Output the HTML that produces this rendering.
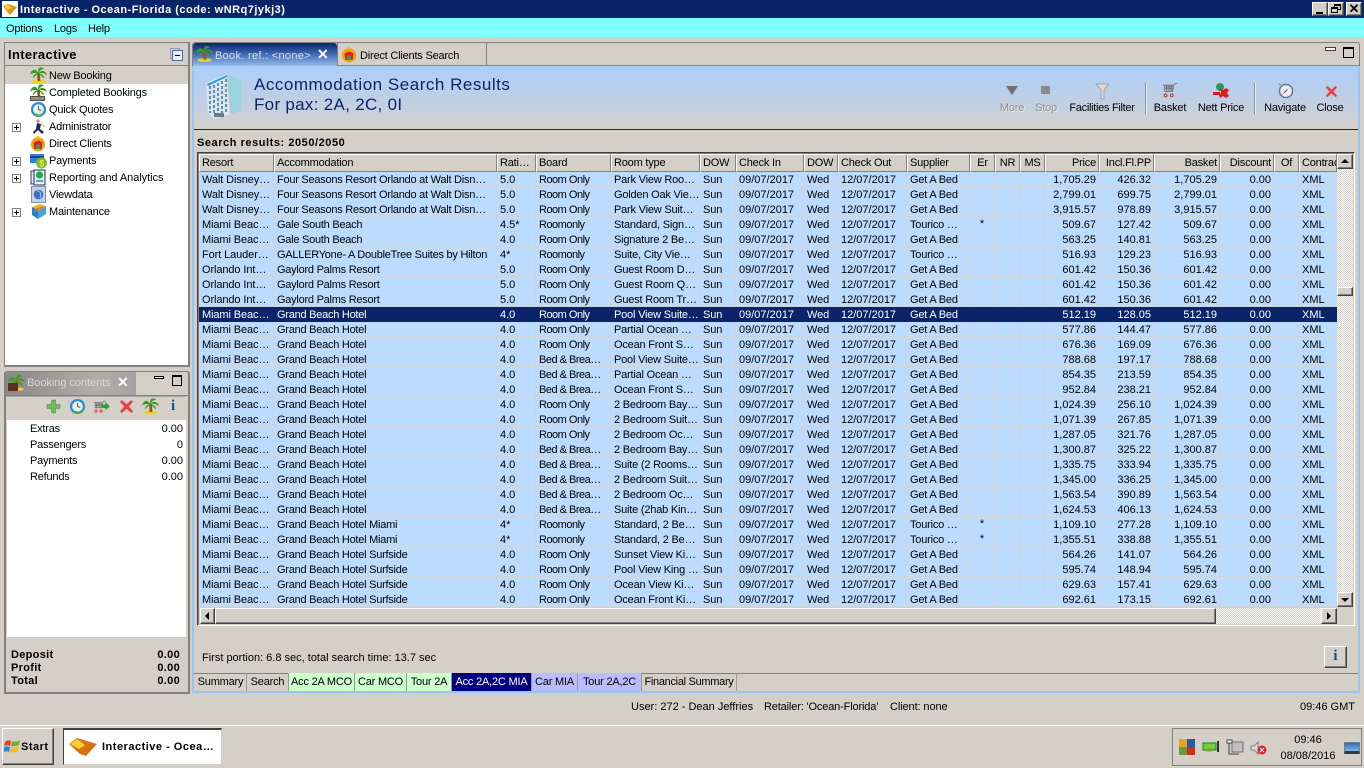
<!DOCTYPE html>
<html><head><meta charset="utf-8"><title>Interactive</title>
<style>
*{box-sizing:border-box}
html,body{margin:0;padding:0;width:1364px;height:768px;overflow:hidden;background:#d4d0c8;font:11px/13px "Liberation Sans",sans-serif;color:#000}
.a{position:absolute;white-space:nowrap}
.l{letter-spacing:-.2px}
.b{font-weight:bold}
.rs{text-align:right}
.c{text-align:center;transform:translateX(-50%)}
.rz{border:1px solid;border-color:#fff #404040 #404040 #fff;background:#d4d0c8;box-shadow:inset -1px -1px 0 #808080}
svg.i{position:absolute;overflow:visible}
table{position:absolute;left:199px;top:154px;width:1138px;border-collapse:separate;border-spacing:0;table-layout:fixed}
th{height:18px;font-weight:normal;text-align:left;padding:0 0 0 2px;background:#d4d0c8;border:1px solid;border-color:#fff #808080 #808080 #fff;white-space:nowrap;overflow:hidden;letter-spacing:-.2px}
td{height:15px;padding:2px 0 0 3px;background:#bbdcff;border-right:1px solid #cfd4da;border-bottom:1px solid #cfd4da;white-space:nowrap;overflow:hidden;line-height:12px}
td:nth-child(1){letter-spacing:-.1px}
td:nth-child(2){letter-spacing:-.25px}
td:nth-child(4){letter-spacing:-.5px}
td:nth-child(5){letter-spacing:-.2px}
td:nth-child(6),td:nth-child(8){letter-spacing:-.1px}
td:nth-child(10){letter-spacing:-.2px}
th.r,td.r{text-align:right;padding:2px 2px 0 0}
th.r{padding:0 2px 0 0}
td.m{text-align:center;padding:0}
tr.s td{background:#0a246a;color:#fff;border-color:#0a246a}
.chk{background-color:#e8e6e2;background-image:repeating-conic-gradient(#d4d0c8 0 25%,#fff 0 50%);background-size:2px 2px}
.tab{position:absolute;top:673px;height:18px;line-height:18px;text-align:center;border-right:1px solid #999;letter-spacing:-.2px;white-space:nowrap}
.pl{position:absolute;left:12px;width:9px;height:9px;border:1px solid #808080;background:linear-gradient(#000,#000) center/5px 1px no-repeat,linear-gradient(#000,#000) center/1px 5px no-repeat,#fff}
</style></head><body>
<svg width="0" height="0" style="position:absolute">
<defs>
<symbol id="palm" viewBox="0 0 18 18"><ellipse cx="9" cy="15.5" rx="7.5" ry="2" fill="#f0d020"/><path d="M7.5 6 L10.5 6 L11 15 L8 15Z" fill="#8a5a20"/><path d="M9 7 C6 1 2 2 0 8 C3 6 6 6 9 7ZM9 7 C7 0 12 -1 15 2 C12 2 10 4 9 7ZM9 7 C12 2 17 4 18 9 C15 6 12 6 9 7ZM9 7 C6 6 3 9 3 12 C6 9 7 8 9 7ZM9 7 C12 7 15 9 15 12 C12 10 11 8 9 7Z" fill="#3c9a20"/></symbol>
<symbol id="clock" viewBox="0 0 18 18"><circle cx="9" cy="9" r="8" fill="#2a8ae0"/><circle cx="9" cy="9" r="5.6" fill="#eee"/><path d="M9 5V9L12 10" stroke="#555" fill="none"/><path d="M5 15C8 18 13 17 15 13L12 13C11 15 8 15 7 13Z" fill="#50b030"/></symbol>
<symbol id="x" viewBox="0 0 16 16"><path d="M3 1 L8 5.5 L13 1 L15 3 L10.5 8 L15 13 L13 15 L8 10.5 L3 15 L1 13 L5.5 8 L1 3Z" fill="#ec4040" stroke="#c8a0a0" stroke-width=".5"/></symbol>
<symbol id="cart" viewBox="0 0 18 18"><path d="M1 3H13L15 1H17M3 3V10H12L13 3M5 3V10M7 3V10M9 3V10M11 3V10M3 5H13M3 7H13" stroke="#707070" fill="none"/><circle cx="4" cy="14.5" r="1.6" fill="none" stroke="#d02020"/><circle cx="11" cy="14.5" r="1.6" fill="none" stroke="#d02020"/></symbol>
<symbol id="shirt" viewBox="0 0 18 18"><circle cx="9" cy="10" r="8" fill="#f0a010"/><path d="M4 8L8 6H11L14 8L13 15H5Z" fill="#e02010"/><rect x="7" y="10" width="4" height="5" fill="#20a080"/><circle cx="9" cy="2" r="1.6" fill="#e8c020"/></symbol>
</defs>
</svg>

<!-- title bar -->
<div class="a" style="left:0;top:0;width:1364px;height:18px;background:#0a246a"></div>
<div class="a" style="left:2px;top:1px;width:16px;height:16px;background:#fff"></div>
<svg class="i" style="left:3px;top:4px" width="14" height="11" viewBox="0 0 14 11"><path d="M0 2L5 0L14 3L7 11L5 9Z" fill="#e89018"/><path d="M1 2L5 1L9 4L5 6Z" fill="#fcd030"/></svg>
<div class="a b" style="left:20px;top:4px;color:#fff;letter-spacing:.48px">Interactive - Ocean-Florida (code: wNRq7jykj3)</div>
<div class="a rz" style="left:1312px;top:2px;width:16px;height:14px"><div class="a" style="left:3px;top:9px;width:7px;height:2px;background:#000"></div></div>
<div class="a rz" style="left:1328px;top:2px;width:16px;height:14px"><div class="a" style="left:5px;top:1px;width:7px;height:6px;border:1px solid #000;border-top-width:2px"></div><div class="a" style="left:2px;top:4px;width:7px;height:6px;border:1px solid #000;border-top-width:2px;background:#d4d0c8"></div></div>
<div class="a rz" style="left:1346px;top:2px;width:16px;height:14px;font:bold 13px/12px 'Liberation Sans',sans-serif;text-align:center">✕</div>

<!-- menu -->
<div class="a" style="left:0;top:18px;width:1364px;height:19px;background:#80ffff"></div>
<div class="a l" style="left:6px;top:23px">Options</div>
<div class="a l" style="left:54px;top:23px">Logs</div>
<div class="a l" style="left:88px;top:23px">Help</div>

<!-- left panel -->
<div class="a" style="left:4px;top:42px;width:186px;height:325px;border:2px solid #808080;border-width:1px 2px 2px 1px;background:#fff"></div>
<div class="a" style="left:5px;top:43px;width:183px;height:23px;background:#d4d0c8;border-bottom:1px solid #808080"></div>
<div class="a b" style="left:8px;top:47px;font-size:13px;letter-spacing:.35px;line-height:15px">Interactive</div>
<div class="a" style="left:170px;top:48px;width:10px;height:11px;border:1px solid #8aa0c0"></div>
<div class="a" style="left:172px;top:50px;width:11px;height:11px;border:1px solid #4a6a98;background:#e8eef8"><div class="a" style="left:2px;top:4px;width:5px;height:1px;background:#000"></div></div>
<div class="a" style="left:5px;top:66px;width:183px;height:18px;background:#d4d0c8"></div>
<svg class="i" style="left:30px;top:67px" width="17" height="17"><use href="#palm"/></svg>
<svg class="i" style="left:30px;top:84px" width="17" height="17"><use href="#palm"/></svg>
<div class="a" style="left:30px;top:96px;width:15px;height:5px;background:#909080;border:1px solid #505040"></div>
<svg class="i" style="left:30px;top:101px" width="17" height="17"><use href="#clock"/></svg>
<svg class="i" style="left:32px;top:119px" width="15" height="16" viewBox="0 0 15 16"><circle cx="6" cy="2" r="1.6" fill="#c89060"/><path d="M5 4L9 5L8 10L12 13L10 15L6 11L2 15L1 13L4 10Z" fill="#1a2a60"/><path d="M9 5L13 8" stroke="#e0b020"/></svg>
<svg class="i" style="left:30px;top:135px" width="16" height="17"><use href="#shirt"/></svg>
<svg class="i" style="left:30px;top:153px" width="17" height="16" viewBox="0 0 17 16"><rect x="0" y="1" width="14" height="9" fill="#3080d8"/><rect x="0" y="3" width="14" height="2" fill="#20408a"/><circle cx="11.5" cy="10" r="5.5" fill="#70c030"/><text x="9.2" y="13.5" font-size="9" font-weight="bold" fill="#ffe040" font-family="Liberation Sans">$</text></svg>
<svg class="i" style="left:31px;top:169px" width="15" height="17" viewBox="0 0 15 17"><rect x="0" y="2" width="9" height="13" fill="#dfe6f0" stroke="#304870"/><rect x="3" y="1" width="11" height="15" fill="#e8f0f0" stroke="#1a3060"/><circle cx="8.5" cy="6" r="3.6" fill="#20b040"/><rect x="5" y="11" width="7" height="2" fill="#50a0d0"/></svg>
<svg class="i" style="left:31px;top:186px" width="15" height="17" viewBox="0 0 15 17"><rect x=".5" y=".5" width="14" height="16" fill="#c8d0e4" stroke="#8090a8"/><circle cx="7.5" cy="8.5" r="4.8" fill="#3a70c0"/><path d="M6 5C9 5 11 8 9 12" stroke="#a0c8f0" fill="none"/></svg>
<svg class="i" style="left:31px;top:203px" width="16" height="17" viewBox="0 0 16 17"><path d="M1 4L9 1L15 3L7 7Z" fill="#f0b020"/><path d="M1 4L7 7V16L1 12Z" fill="#2080c8"/><path d="M7 7L15 3V11L7 16Z" fill="#40a8d8"/><path d="M3 7L12 4M3 9L12 6" stroke="#e07010"/></svg>
<div class="pl" style="top:123px"></div>
<div class="pl" style="top:157px"></div>
<div class="pl" style="top:174px"></div>
<div class="pl" style="top:208px"></div>
<div class="a l" style="left:49px;top:70px">New Booking</div>
<div class="a l" style="left:49px;top:87px">Completed Bookings</div>
<div class="a l" style="left:49px;top:104px">Quick Quotes</div>
<div class="a l" style="left:49px;top:121px">Administrator</div>
<div class="a l" style="left:49px;top:138px">Direct Clients</div>
<div class="a l" style="left:49px;top:155px">Payments</div>
<div class="a l" style="left:49px;top:172px;letter-spacing:-.05px">Reporting and Analytics</div>
<div class="a l" style="left:49px;top:189px">Viewdata</div>
<div class="a l" style="left:49px;top:206px">Maintenance</div>

<!-- booking panel -->
<div class="a" style="left:4px;top:371px;width:186px;height:323px;border:1px solid #808080;border-width:1px 2px 2px 2px;border-radius:3px 3px 0 0"></div>
<div class="a" style="left:5px;top:372px;width:131px;height:23px;background:linear-gradient(90deg,#8a8886,#b0aeaa 70%,#a4a2a0);border-radius:3px 0 0 0"></div>
<div class="a" style="left:5px;top:395px;width:183px;height:1px;background:#808080"></div>
<svg class="i" style="left:8px;top:374px" width="17" height="18"><use href="#palm"/></svg>
<div class="a" style="left:8px;top:383px;width:10px;height:8px;background:#5a3020"></div>
<div class="a" style="left:27px;top:377px;color:#d8d8d4;letter-spacing:-.05px">Booking contents</div>
<div class="a b" style="left:117px;top:375px;color:#fff;font-size:14px;line-height:15px">✕</div>
<div class="a" style="left:154px;top:376px;width:10px;height:3px;border:1px solid #000;background:#fff"></div>
<div class="a" style="left:172px;top:375px;width:10px;height:11px;border:1px solid #000;border-top-width:2px"></div>
<div class="a" style="left:7px;top:396px;width:179px;height:1px;background:#a8a6a0"></div>
<svg class="i" style="left:47px;top:400px" width="13" height="13" viewBox="0 0 13 13"><path d="M4.5 0H8.5V4.5H13V8.5H8.5V13H4.5V8.5H0V4.5H4.5Z" fill="#70b858" stroke="#508040" stroke-width=".5"/></svg>
<svg class="i" style="left:69px;top:398px" width="17" height="17"><use href="#clock"/></svg>
<svg class="i" style="left:93px;top:399px" width="17" height="16" viewBox="0 0 18 17"><use href="#cart" width="14" height="17"/><path d="M9 6H13V3L18 8L13 12V9.5H9Z" fill="#30a030"/></svg>
<svg class="i" style="left:119px;top:399px" width="15" height="15"><use href="#x" width="15" height="15"/></svg>
<svg class="i" style="left:142px;top:398px" width="17" height="17"><use href="#palm"/></svg>
<div class="a b" style="left:171px;top:399px;color:#0a50a0;font:bold 15px/15px 'Liberation Serif',serif">i</div>
<div class="a" style="left:7px;top:420px;width:179px;height:217px;background:#fff"></div>
<div class="a l" style="left:30px;top:423px">Extras</div><div class="a rs" style="right:1181px;top:423px">0.00</div>
<div class="a l" style="left:30px;top:439px">Passengers</div><div class="a rs" style="right:1181px;top:439px">0</div>
<div class="a l" style="left:30px;top:455px">Payments</div><div class="a rs" style="right:1181px;top:455px">0.00</div>
<div class="a l" style="left:30px;top:471px">Refunds</div><div class="a rs" style="right:1181px;top:471px">0.00</div>
<div class="a b" style="left:11px;top:649px;letter-spacing:.3px">Deposit</div><div class="a b rs" style="right:1184px;top:649px;letter-spacing:.3px">0.00</div>
<div class="a b" style="left:11px;top:662px;letter-spacing:.3px">Profit</div><div class="a b rs" style="right:1184px;top:662px;letter-spacing:.3px">0.00</div>
<div class="a b" style="left:11px;top:675px;letter-spacing:.3px">Total</div><div class="a b rs" style="right:1184px;top:675px;letter-spacing:.3px">0.00</div>

<!-- main panel -->
<div class="a" style="left:192px;top:42px;width:1168px;height:651px;border:2px solid #99c3f3;border-top:1px solid #808080;border-radius:3px 3px 0 0"></div>
<div class="a" style="left:192px;top:42px;width:1168px;height:24px;background:#d4d0c8;border:1px solid #808080;border-bottom:1px solid #808080;border-radius:3px 3px 0 0"></div>
<div class="a" style="left:193px;top:43px;width:144px;height:24px;background:linear-gradient(#0a246a,#3d68b0 45%,#9cc4f4);border-radius:3px 3px 0 0"></div>
<div class="a" style="left:337px;top:43px;width:150px;height:23px;border-right:1px solid #808080;border-left:1px solid #808080"></div>
<svg class="i" style="left:196px;top:45px" width="17" height="18"><use href="#palm"/></svg>
<div class="a" style="left:215px;top:50px;color:#d8e0e8;letter-spacing:.3px">Book. ref.: &lt;none&gt;</div>
<div class="a b" style="left:317px;top:47px;color:#fff;font-size:14px;line-height:15px">✕</div>
<svg class="i" style="left:341px;top:46px" width="16" height="17"><use href="#shirt"/></svg>
<div class="a l" style="left:360px;top:50px">Direct Clients Search</div>
<div class="a" style="left:1325px;top:47px;width:11px;height:4px;border:1px solid #404040;background:#fff"></div>
<div class="a" style="left:1343px;top:47px;width:11px;height:11px;border:1px solid #000;border-top-width:2px"></div>

<div class="a" style="left:194px;top:66px;width:1164px;height:63px;background:repeating-linear-gradient(rgba(255,255,255,.05) 0 1px,transparent 1px 2px),linear-gradient(#a8cdfa,#c2cfe0 65%,#d2cfc8)"></div>
<div class="a" style="left:194px;top:129px;width:1164px;height:1px;background:#0a246a"></div>
<svg class="i" style="left:206px;top:73px" width="37" height="47" viewBox="0 0 37 47"><path d="M0 10L21 1L24 41L8 46L2 40Z" fill="#dfe4ea"/><path d="M21 1L36 8L35 38L24 41Z" fill="#a8ccd8"/><path d="M24 4L34 9L33 36L26 38Z" fill="#90d8e8" opacity=".6"/><path d="M1 11L21 2V4L2 13Z" fill="#2aa0dc"/><g stroke="#5a90c0" stroke-width="2" stroke-dasharray="3 2"><path d="M4 13V40"/><path d="M8 12V42"/><path d="M12 10V43"/><path d="M16 8V42"/><path d="M20 6V41"/></g><rect x="8" y="40" width="10" height="4" fill="#707880"/></svg>
<div class="a" style="left:254px;top:75px;font-size:17px;line-height:20px;color:#0a246a;letter-spacing:.52px">Accommodation Search Results</div>
<div class="a" style="left:254px;top:95px;font-size:17px;line-height:20px;color:#0a246a;letter-spacing:.3px">For pax: 2A, 2C, 0I</div>

<svg class="i" style="left:1006px;top:85px" width="12" height="11" viewBox="0 0 12 11"><path d="M0 1H12L6 10Z" fill="#707070"/></svg>
<div class="a" style="left:1041px;top:86px;width:9px;height:8px;background:#8a8a8a"></div>
<svg class="i" style="left:1096px;top:83px" width="13" height="17" viewBox="0 0 13 17"><path d="M0 1H13L8 7V16H5V7Z" fill="#d8d8d8" stroke="#a8a8a8"/></svg>
<svg class="i" style="left:1162px;top:82px" width="16" height="17"><use href="#cart"/></svg>
<svg class="i" style="left:1213px;top:83px" width="17" height="15" viewBox="0 0 17 15"><circle cx="7" cy="4" r="4" fill="#2a9a50"/><rect x="0" y="9" width="7" height="3" fill="#d82020"/><path d="M7 5L10 7L13 5L16 7L14 10L16 13L13 15L10 13L7 15L6 12L8 10Z" fill="#d82020"/></svg>
<svg class="i" style="left:1277px;top:82px" width="17" height="17" viewBox="0 0 17 17"><circle cx="9" cy="9" r="6.5" fill="#e8f0fa" stroke="#5a7a9a" stroke-width="1.5"/><path d="M12 6L8 9L5 13L9 10Z" fill="#d04040"/><path d="M1 1L4 2L3 4Z" fill="#c09040"/></svg>
<svg class="i" style="left:1325px;top:85px" width="13" height="13"><use href="#x" width="13" height="13"/></svg>
<div class="a c l" style="left:1012px;top:102px;color:#909090;text-shadow:1px 1px 0 #e8e8e8">More</div>
<div class="a c l" style="left:1046px;top:102px;color:#909090;text-shadow:1px 1px 0 #e8e8e8">Stop</div>
<div class="a c" style="left:1102px;top:102px;letter-spacing:-.3px">Facilities Filter</div>
<div class="a c l" style="left:1170px;top:102px">Basket</div>
<div class="a c l" style="left:1221px;top:102px">Nett Price</div>
<div class="a c l" style="left:1285px;top:102px">Navigate</div>
<div class="a c l" style="left:1330px;top:102px">Close</div>
<div class="a" style="left:1145px;top:82px;width:2px;height:32px;background:#8a929c;border-right:1px solid #e8eef4"></div>
<div class="a" style="left:1254px;top:82px;width:2px;height:32px;background:#8a929c;border-right:1px solid #e8eef4"></div>

<div class="a b" style="left:197px;top:137px;letter-spacing:.55px">Search results: 2050/2050</div>

<!-- grid -->
<div class="a" style="left:197px;top:152px;width:1158px;height:474px;border:1px solid;border-color:#404040 #fff #fff #404040;background:#d4d0c8;box-shadow:inset 1px 1px 0 #808080"></div>
<table>
<colgroup><col style="width:75px"><col style="width:223px"><col style="width:39px"><col style="width:75px"><col style="width:89px"><col style="width:36px"><col style="width:68px"><col style="width:34px"><col style="width:69px"><col style="width:63px"><col style="width:25px"><col style="width:25px"><col style="width:25px"><col style="width:54px"><col style="width:55px"><col style="width:66px"><col style="width:54px"><col style="width:25px"><col style="width:38px"></colgroup>
<tr><th>Resort</th><th>Accommodation</th><th>Rati…</th><th>Board</th><th>Room type</th><th>DOW</th><th>Check In</th><th>DOW</th><th>Check Out</th><th>Supplier</th><th style="text-align:center;padding:0">Er</th><th style="text-align:center;padding:0">NR</th><th style="text-align:center;padding:0">MS</th><th class="r">Price</th><th class="r">Incl.Fl.PP</th><th class="r">Basket</th><th class="r">Discount</th><th style="text-align:center;padding:0">Of</th><th>Contrac</th></tr>
<tr><td>Walt Disney…</td><td>Four Seasons Resort Orlando at Walt Disn…</td><td>5.0</td><td>Room Only</td><td>Park View Roo…</td><td>Sun</td><td>09/07/2017</td><td>Wed</td><td>12/07/2017</td><td>Get A Bed</td><td class="m"></td><td></td><td></td><td class="r">1,705.29</td><td class="r">426.32</td><td class="r">1,705.29</td><td class="r">0.00</td><td></td><td>XML</td></tr>
<tr><td>Walt Disney…</td><td>Four Seasons Resort Orlando at Walt Disn…</td><td>5.0</td><td>Room Only</td><td>Golden Oak Vie…</td><td>Sun</td><td>09/07/2017</td><td>Wed</td><td>12/07/2017</td><td>Get A Bed</td><td class="m"></td><td></td><td></td><td class="r">2,799.01</td><td class="r">699.75</td><td class="r">2,799.01</td><td class="r">0.00</td><td></td><td>XML</td></tr>
<tr><td>Walt Disney…</td><td>Four Seasons Resort Orlando at Walt Disn…</td><td>5.0</td><td>Room Only</td><td>Park View Suit…</td><td>Sun</td><td>09/07/2017</td><td>Wed</td><td>12/07/2017</td><td>Get A Bed</td><td class="m"></td><td></td><td></td><td class="r">3,915.57</td><td class="r">978.89</td><td class="r">3,915.57</td><td class="r">0.00</td><td></td><td>XML</td></tr>
<tr><td>Miami Beac…</td><td>Gale South Beach</td><td>4.5*</td><td>Roomonly</td><td>Standard, Sign…</td><td>Sun</td><td>09/07/2017</td><td>Wed</td><td>12/07/2017</td><td>Tourico …</td><td class="m">*</td><td></td><td></td><td class="r">509.67</td><td class="r">127.42</td><td class="r">509.67</td><td class="r">0.00</td><td></td><td>XML</td></tr>
<tr><td>Miami Beac…</td><td>Gale South Beach</td><td>4.0</td><td>Room Only</td><td>Signature 2 Be…</td><td>Sun</td><td>09/07/2017</td><td>Wed</td><td>12/07/2017</td><td>Get A Bed</td><td class="m"></td><td></td><td></td><td class="r">563.25</td><td class="r">140.81</td><td class="r">563.25</td><td class="r">0.00</td><td></td><td>XML</td></tr>
<tr><td>Fort Lauder…</td><td>GALLERYone- A DoubleTree Suites by Hilton</td><td>4*</td><td>Roomonly</td><td>Suite, City Vie…</td><td>Sun</td><td>09/07/2017</td><td>Wed</td><td>12/07/2017</td><td>Tourico …</td><td class="m"></td><td></td><td></td><td class="r">516.93</td><td class="r">129.23</td><td class="r">516.93</td><td class="r">0.00</td><td></td><td>XML</td></tr>
<tr><td>Orlando Int…</td><td>Gaylord Palms Resort</td><td>5.0</td><td>Room Only</td><td>Guest Room D…</td><td>Sun</td><td>09/07/2017</td><td>Wed</td><td>12/07/2017</td><td>Get A Bed</td><td class="m"></td><td></td><td></td><td class="r">601.42</td><td class="r">150.36</td><td class="r">601.42</td><td class="r">0.00</td><td></td><td>XML</td></tr>
<tr><td>Orlando Int…</td><td>Gaylord Palms Resort</td><td>5.0</td><td>Room Only</td><td>Guest Room Q…</td><td>Sun</td><td>09/07/2017</td><td>Wed</td><td>12/07/2017</td><td>Get A Bed</td><td class="m"></td><td></td><td></td><td class="r">601.42</td><td class="r">150.36</td><td class="r">601.42</td><td class="r">0.00</td><td></td><td>XML</td></tr>
<tr><td>Orlando Int…</td><td>Gaylord Palms Resort</td><td>5.0</td><td>Room Only</td><td>Guest Room Tr…</td><td>Sun</td><td>09/07/2017</td><td>Wed</td><td>12/07/2017</td><td>Get A Bed</td><td class="m"></td><td></td><td></td><td class="r">601.42</td><td class="r">150.36</td><td class="r">601.42</td><td class="r">0.00</td><td></td><td>XML</td></tr>
<tr class="s"><td>Miami Beac…</td><td>Grand Beach Hotel</td><td>4.0</td><td>Room Only</td><td>Pool View Suite…</td><td>Sun</td><td>09/07/2017</td><td>Wed</td><td>12/07/2017</td><td>Get A Bed</td><td class="m"></td><td></td><td></td><td class="r">512.19</td><td class="r">128.05</td><td class="r">512.19</td><td class="r">0.00</td><td></td><td>XML</td></tr>
<tr><td>Miami Beac…</td><td>Grand Beach Hotel</td><td>4.0</td><td>Room Only</td><td>Partial Ocean …</td><td>Sun</td><td>09/07/2017</td><td>Wed</td><td>12/07/2017</td><td>Get A Bed</td><td class="m"></td><td></td><td></td><td class="r">577.86</td><td class="r">144.47</td><td class="r">577.86</td><td class="r">0.00</td><td></td><td>XML</td></tr>
<tr><td>Miami Beac…</td><td>Grand Beach Hotel</td><td>4.0</td><td>Room Only</td><td>Ocean Front S…</td><td>Sun</td><td>09/07/2017</td><td>Wed</td><td>12/07/2017</td><td>Get A Bed</td><td class="m"></td><td></td><td></td><td class="r">676.36</td><td class="r">169.09</td><td class="r">676.36</td><td class="r">0.00</td><td></td><td>XML</td></tr>
<tr><td>Miami Beac…</td><td>Grand Beach Hotel</td><td>4.0</td><td>Bed &amp; Brea…</td><td>Pool View Suite…</td><td>Sun</td><td>09/07/2017</td><td>Wed</td><td>12/07/2017</td><td>Get A Bed</td><td class="m"></td><td></td><td></td><td class="r">788.68</td><td class="r">197.17</td><td class="r">788.68</td><td class="r">0.00</td><td></td><td>XML</td></tr>
<tr><td>Miami Beac…</td><td>Grand Beach Hotel</td><td>4.0</td><td>Bed &amp; Brea…</td><td>Partial Ocean …</td><td>Sun</td><td>09/07/2017</td><td>Wed</td><td>12/07/2017</td><td>Get A Bed</td><td class="m"></td><td></td><td></td><td class="r">854.35</td><td class="r">213.59</td><td class="r">854.35</td><td class="r">0.00</td><td></td><td>XML</td></tr>
<tr><td>Miami Beac…</td><td>Grand Beach Hotel</td><td>4.0</td><td>Bed &amp; Brea…</td><td>Ocean Front S…</td><td>Sun</td><td>09/07/2017</td><td>Wed</td><td>12/07/2017</td><td>Get A Bed</td><td class="m"></td><td></td><td></td><td class="r">952.84</td><td class="r">238.21</td><td class="r">952.84</td><td class="r">0.00</td><td></td><td>XML</td></tr>
<tr><td>Miami Beac…</td><td>Grand Beach Hotel</td><td>4.0</td><td>Room Only</td><td>2 Bedroom Bay…</td><td>Sun</td><td>09/07/2017</td><td>Wed</td><td>12/07/2017</td><td>Get A Bed</td><td class="m"></td><td></td><td></td><td class="r">1,024.39</td><td class="r">256.10</td><td class="r">1,024.39</td><td class="r">0.00</td><td></td><td>XML</td></tr>
<tr><td>Miami Beac…</td><td>Grand Beach Hotel</td><td>4.0</td><td>Room Only</td><td>2 Bedroom Suit…</td><td>Sun</td><td>09/07/2017</td><td>Wed</td><td>12/07/2017</td><td>Get A Bed</td><td class="m"></td><td></td><td></td><td class="r">1,071.39</td><td class="r">267.85</td><td class="r">1,071.39</td><td class="r">0.00</td><td></td><td>XML</td></tr>
<tr><td>Miami Beac…</td><td>Grand Beach Hotel</td><td>4.0</td><td>Room Only</td><td>2 Bedroom Oc…</td><td>Sun</td><td>09/07/2017</td><td>Wed</td><td>12/07/2017</td><td>Get A Bed</td><td class="m"></td><td></td><td></td><td class="r">1,287.05</td><td class="r">321.76</td><td class="r">1,287.05</td><td class="r">0.00</td><td></td><td>XML</td></tr>
<tr><td>Miami Beac…</td><td>Grand Beach Hotel</td><td>4.0</td><td>Bed &amp; Brea…</td><td>2 Bedroom Bay…</td><td>Sun</td><td>09/07/2017</td><td>Wed</td><td>12/07/2017</td><td>Get A Bed</td><td class="m"></td><td></td><td></td><td class="r">1,300.87</td><td class="r">325.22</td><td class="r">1,300.87</td><td class="r">0.00</td><td></td><td>XML</td></tr>
<tr><td>Miami Beac…</td><td>Grand Beach Hotel</td><td>4.0</td><td>Bed &amp; Brea…</td><td>Suite (2 Rooms…</td><td>Sun</td><td>09/07/2017</td><td>Wed</td><td>12/07/2017</td><td>Get A Bed</td><td class="m"></td><td></td><td></td><td class="r">1,335.75</td><td class="r">333.94</td><td class="r">1,335.75</td><td class="r">0.00</td><td></td><td>XML</td></tr>
<tr><td>Miami Beac…</td><td>Grand Beach Hotel</td><td>4.0</td><td>Bed &amp; Brea…</td><td>2 Bedroom Suit…</td><td>Sun</td><td>09/07/2017</td><td>Wed</td><td>12/07/2017</td><td>Get A Bed</td><td class="m"></td><td></td><td></td><td class="r">1,345.00</td><td class="r">336.25</td><td class="r">1,345.00</td><td class="r">0.00</td><td></td><td>XML</td></tr>
<tr><td>Miami Beac…</td><td>Grand Beach Hotel</td><td>4.0</td><td>Bed &amp; Brea…</td><td>2 Bedroom Oc…</td><td>Sun</td><td>09/07/2017</td><td>Wed</td><td>12/07/2017</td><td>Get A Bed</td><td class="m"></td><td></td><td></td><td class="r">1,563.54</td><td class="r">390.89</td><td class="r">1,563.54</td><td class="r">0.00</td><td></td><td>XML</td></tr>
<tr><td>Miami Beac…</td><td>Grand Beach Hotel</td><td>4.0</td><td>Bed &amp; Brea…</td><td>Suite (2hab Kin…</td><td>Sun</td><td>09/07/2017</td><td>Wed</td><td>12/07/2017</td><td>Get A Bed</td><td class="m"></td><td></td><td></td><td class="r">1,624.53</td><td class="r">406.13</td><td class="r">1,624.53</td><td class="r">0.00</td><td></td><td>XML</td></tr>
<tr><td>Miami Beac…</td><td>Grand Beach Hotel Miami</td><td>4*</td><td>Roomonly</td><td>Standard, 2 Be…</td><td>Sun</td><td>09/07/2017</td><td>Wed</td><td>12/07/2017</td><td>Tourico …</td><td class="m">*</td><td></td><td></td><td class="r">1,109.10</td><td class="r">277.28</td><td class="r">1,109.10</td><td class="r">0.00</td><td></td><td>XML</td></tr>
<tr><td>Miami Beac…</td><td>Grand Beach Hotel Miami</td><td>4*</td><td>Roomonly</td><td>Standard, 2 Be…</td><td>Sun</td><td>09/07/2017</td><td>Wed</td><td>12/07/2017</td><td>Tourico …</td><td class="m">*</td><td></td><td></td><td class="r">1,355.51</td><td class="r">338.88</td><td class="r">1,355.51</td><td class="r">0.00</td><td></td><td>XML</td></tr>
<tr><td>Miami Beac…</td><td>Grand Beach Hotel Surfside</td><td>4.0</td><td>Room Only</td><td>Sunset View Ki…</td><td>Sun</td><td>09/07/2017</td><td>Wed</td><td>12/07/2017</td><td>Get A Bed</td><td class="m"></td><td></td><td></td><td class="r">564.26</td><td class="r">141.07</td><td class="r">564.26</td><td class="r">0.00</td><td></td><td>XML</td></tr>
<tr><td>Miami Beac…</td><td>Grand Beach Hotel Surfside</td><td>4.0</td><td>Room Only</td><td>Pool View King …</td><td>Sun</td><td>09/07/2017</td><td>Wed</td><td>12/07/2017</td><td>Get A Bed</td><td class="m"></td><td></td><td></td><td class="r">595.74</td><td class="r">148.94</td><td class="r">595.74</td><td class="r">0.00</td><td></td><td>XML</td></tr>
<tr><td>Miami Beac…</td><td>Grand Beach Hotel Surfside</td><td>4.0</td><td>Room Only</td><td>Ocean View Ki…</td><td>Sun</td><td>09/07/2017</td><td>Wed</td><td>12/07/2017</td><td>Get A Bed</td><td class="m"></td><td></td><td></td><td class="r">629.63</td><td class="r">157.41</td><td class="r">629.63</td><td class="r">0.00</td><td></td><td>XML</td></tr>
<tr><td>Miami Beac…</td><td>Grand Beach Hotel Surfside</td><td>4.0</td><td>Room Only</td><td>Ocean Front Ki…</td><td>Sun</td><td>09/07/2017</td><td>Wed</td><td>12/07/2017</td><td>Get A Bed</td><td class="m"></td><td></td><td></td><td class="r">692.61</td><td class="r">173.15</td><td class="r">692.61</td><td class="r">0.00</td><td></td><td>XML</td></tr>
</table>

<!-- scrollbars -->
<div class="a chk" style="left:1337px;top:154px;width:16px;height:453px"></div>
<div class="a rz" style="left:1337px;top:154px;width:16px;height:15px"><div class="a" style="left:3px;top:4px;border:4px solid transparent;border-top:0;border-bottom:4px solid #000"></div></div>
<div class="a rz" style="left:1337px;top:287px;width:16px;height:9px"></div>
<div class="a rz" style="left:1337px;top:592px;width:16px;height:15px"><div class="a" style="left:3px;top:5px;border:4px solid transparent;border-bottom:0;border-top:4px solid #000"></div></div>
<div class="a chk" style="left:200px;top:608px;width:1137px;height:16px"></div>
<div class="a rz" style="left:200px;top:608px;width:15px;height:16px"><div class="a" style="left:4px;top:3px;border:4px solid transparent;border-left:0;border-right:4px solid #000"></div></div>
<div class="a rz" style="left:215px;top:608px;width:1001px;height:16px"></div>
<div class="a rz" style="left:1321px;top:608px;width:16px;height:16px"><div class="a" style="left:5px;top:3px;border:4px solid transparent;border-right:0;border-left:4px solid #000"></div></div>

<!-- status -->
<div class="a" style="left:202px;top:652px">First portion: 6.8 sec, total search time: 13.7 sec</div>
<div class="a rz" style="left:1324px;top:646px;width:23px;height:22px;color:#0a50a0;font:bold 15px/19px 'Liberation Serif',serif;text-align:center">i</div>

<!-- bottom tabs -->
<div class="a" style="left:194px;top:673px;width:1164px;height:1px;background:#808080"></div>
<div class="tab" style="left:195px;width:52px">Summary</div>
<div class="tab" style="left:247px;width:42px">Search</div>
<div class="tab" style="left:289px;width:66px;background:#ccffcc">Acc 2A MCO</div>
<div class="tab" style="left:355px;width:52px;background:#ccffcc">Car MCO</div>
<div class="tab" style="left:407px;width:45px;background:#ccffcc">Tour 2A</div>
<div class="tab" style="left:452px;width:80px;background:#000080;color:#fff">Acc 2A,2C MIA</div>
<div class="tab" style="left:532px;width:46px;background:#bbbbff">Car MIA</div>
<div class="tab" style="left:578px;width:64px;background:#bbbbff">Tour 2A,2C</div>
<div class="tab" style="left:642px;width:95px;letter-spacing:-.3px">Financial Summary</div>

<div class="a" style="left:631px;top:701px">User: 272 - Dean Jeffries</div>
<div class="a" style="left:764px;top:701px;letter-spacing:-.15px">Retailer: 'Ocean-Florida'</div>
<div class="a" style="left:890px;top:701px;letter-spacing:-.1px">Client: none</div>
<div class="a rs" style="right:9px;top:701px">09:46 GMT</div>

<!-- taskbar -->
<div class="a" style="left:0;top:725px;width:1364px;height:1px;background:#fff"></div>
<div class="a" style="left:2px;top:728px;width:52px;height:37px;border:1px solid;border-color:#fff #404040 #404040 #fff;box-shadow:inset -1px -1px 0 #808080"></div>
<svg class="i" style="left:4px;top:739px" width="16" height="15" viewBox="0 0 16 15"><path d="M1 3C3 1 5 1 7 2L6 7C4 6 2 6 0 7Z" fill="#e84020"/><path d="M8 2C10 3 13 3 16 1L15 6C12 7 10 7 7 7Z" fill="#70b030"/><path d="M0 8C2 7 4 7 6 8L5 13C3 12 2 12 0 13Z" fill="#3080e0"/><path d="M7 8C10 8 12 8 15 7L14 12C11 14 8 14 6 13Z" fill="#f0c020"/></svg>
<div class="a b" style="left:21px;top:741px;letter-spacing:.5px">Start</div>
<div class="a" style="left:63px;top:728px;width:159px;height:37px;background:#fff;border:1px solid;border-color:#404040 #d4d0c8 #d4d0c8 #404040;border-width:2px 1px 1px 1px"></div>
<svg class="i" style="left:69px;top:737px" width="28" height="20" viewBox="0 0 28 20"><path d="M0 7L8 1L28 7L17 19L11 17Z" fill="#d87018"/><path d="M1 7L8 2L16 8L10 12Z" fill="#fcd030"/></svg>
<div class="a b" style="left:102px;top:741px;letter-spacing:.5px">Interactive - Ocea…</div>
<div class="a" style="left:1172px;top:728px;width:190px;height:38px;border:1px solid;border-color:#808080 #808080 #808080 #808080"></div>
<svg class="i" style="left:1179px;top:739px" width="16" height="16" viewBox="0 0 16 16"><rect width="8" height="8" fill="#f0a020"/><rect x="8" width="8" height="8" fill="#2060a0"/><rect y="8" width="8" height="8" fill="#60a040"/><rect x="8" y="8" width="8" height="8" fill="#d03020"/></svg>
<svg class="i" style="left:1203px;top:741px" width="16" height="12" viewBox="0 0 16 12"><rect y="2" width="13" height="7" fill="#70d040" stroke="#208020"/><rect x="14" width="2" height="11" fill="#333"/><path d="M4 9V11M6 9V11M8 9V11" stroke="#c09000"/></svg>
<svg class="i" style="left:1227px;top:739px" width="16" height="16" viewBox="0 0 16 16"><rect x="5" y="3" width="11" height="10" fill="#c0c0c0" stroke="#707070"/><rect x="0" y="1" width="5" height="3" fill="#fff" stroke="#404040"/><path d="M2 4V15H12" stroke="#404040" fill="none"/></svg>
<svg class="i" style="left:1251px;top:741px" width="16" height="14" viewBox="0 0 16 14"><path d="M0 5H3L7 1V13L3 9H0Z" fill="#d8d8d8" stroke="#808080"/><circle cx="11" cy="9" r="4.5" fill="#e82020"/><path d="M9 7L13 11M13 7L9 11" stroke="#fff"/></svg>
<div class="a c" style="left:1308px;top:734px">09:46</div>
<div class="a c" style="left:1308px;top:750px">08/08/2016</div>
<div class="a" style="left:1344px;top:742px;width:16px;height:12px;background:linear-gradient(#2a70c8,#80b0e0);border:1px solid #708090;border-bottom:3px solid #304050"></div>
</body></html>
